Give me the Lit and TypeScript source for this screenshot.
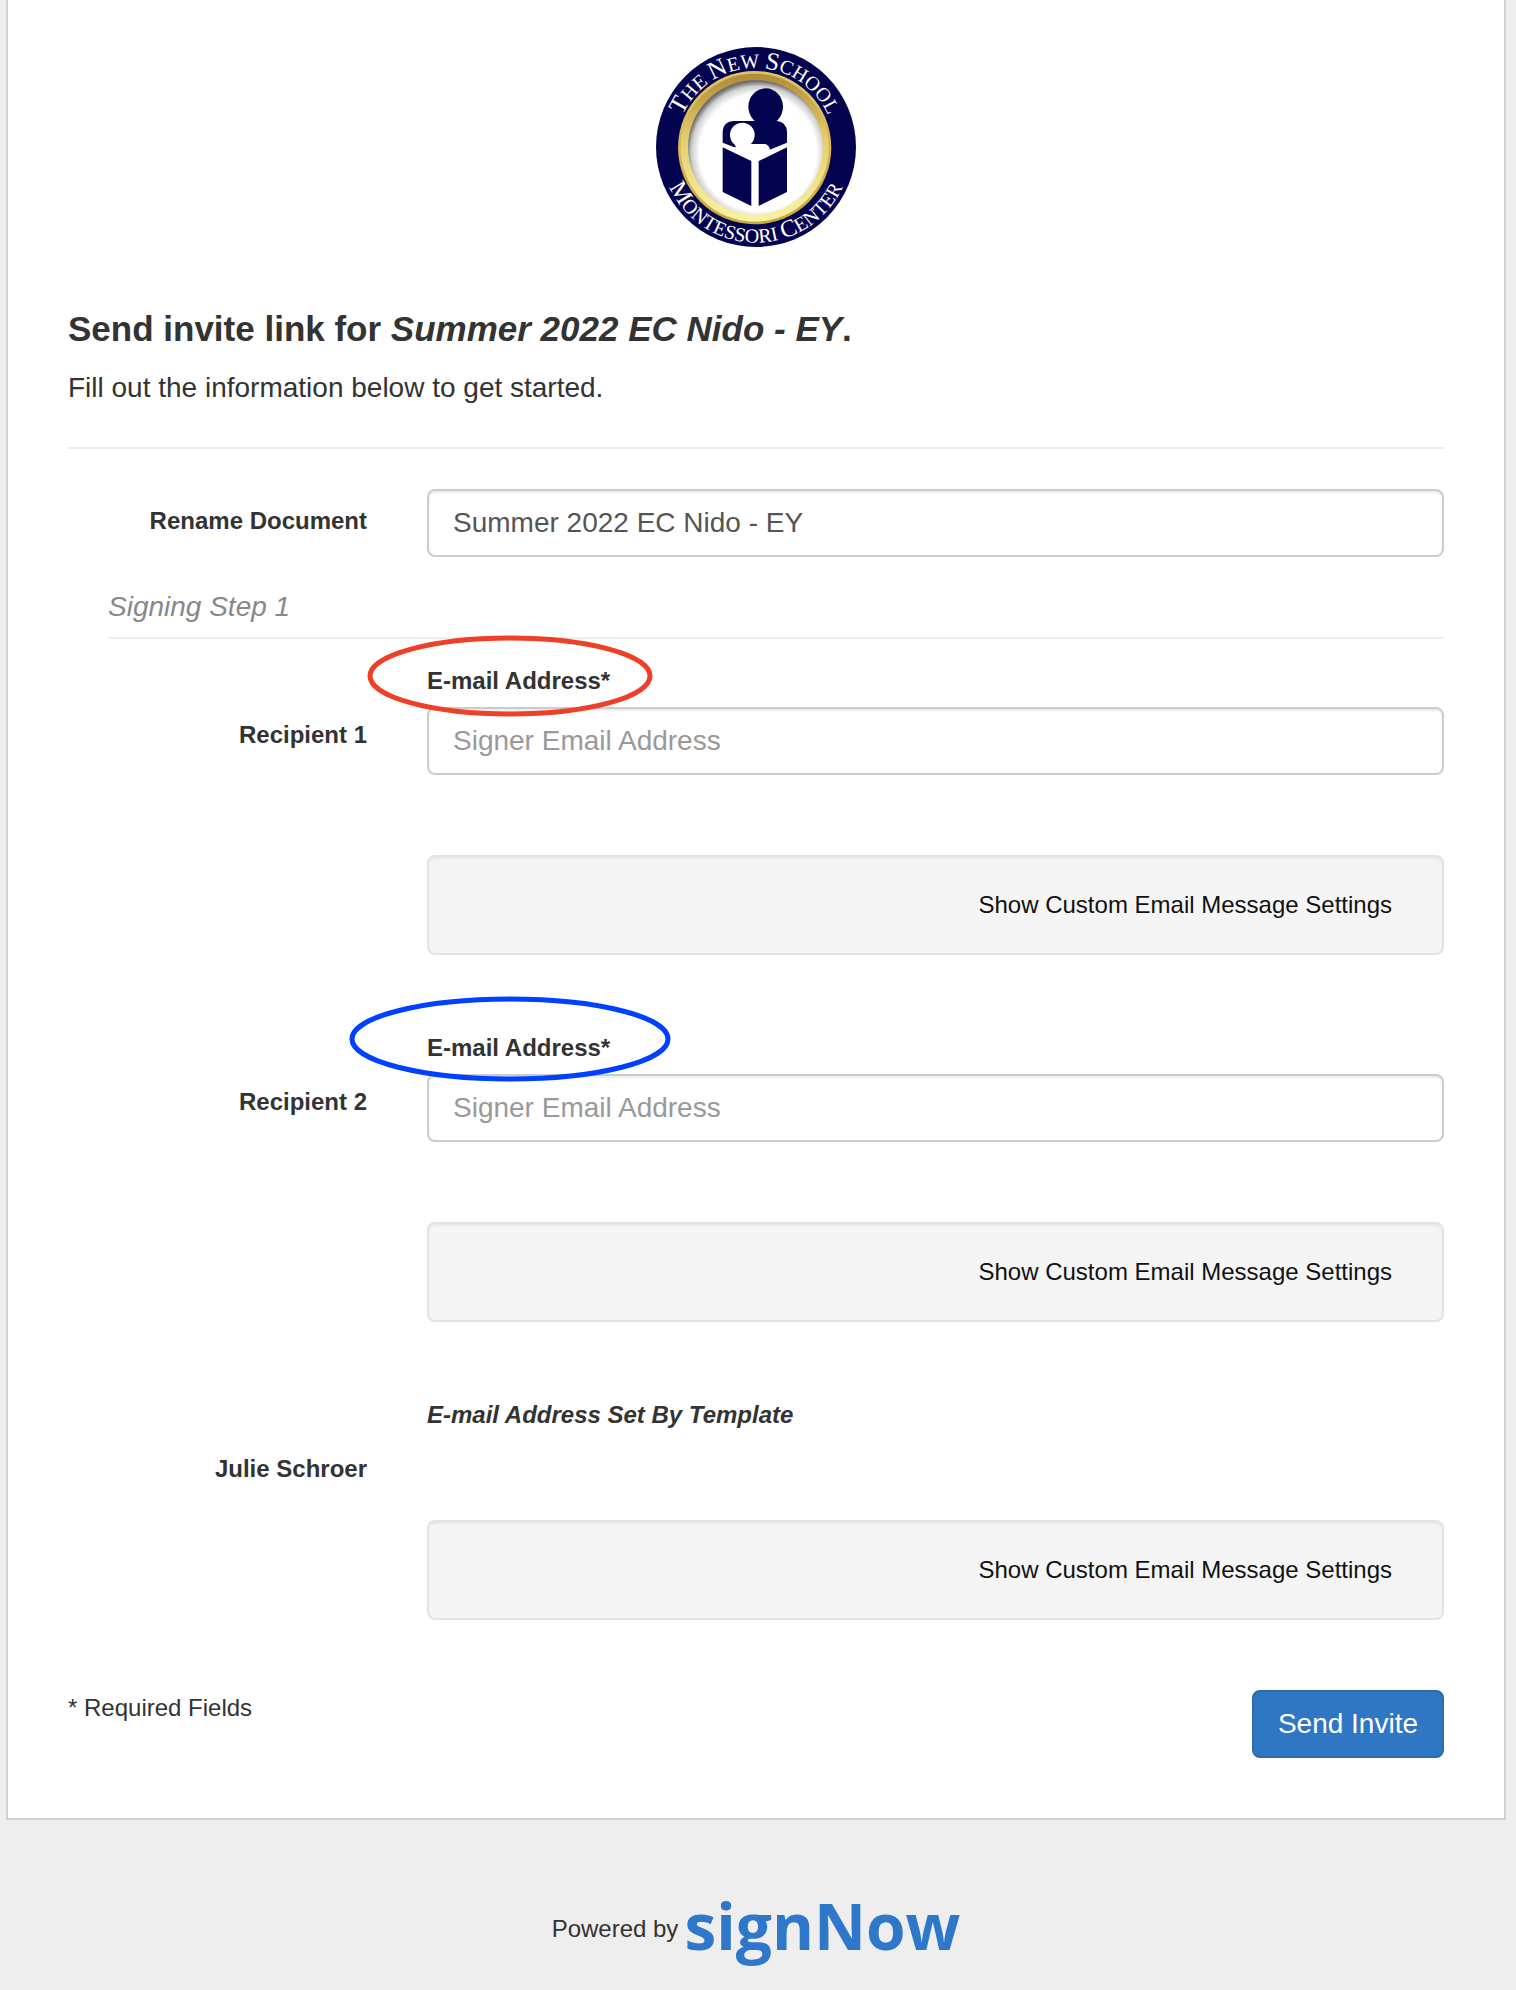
import { LitElement, html, css, nothing } from "lit";
import { customElement, property } from "lit/decorators.js";

@customElement("school-seal")
export class SchoolSeal extends LitElement {
  static styles = css`
    :host { display: block; width: 200px; height: 200px; }
    svg { display: block; width: 100%; height: 100%; }
    .lettering { font-family: "Liberation Serif", serif; fill: #fff; }
    .cap { font-size: 75px; }
    .small { font-size: 60px; }
    .low-cap { font-size: 73px; }
    .low-small { font-size: 60px; }
  `;

  render() {
    return html`<svg viewBox="48 51 600 600" role="img" aria-label="The New School Montessori Center">
      <defs>
        <linearGradient id="gold" x1="0" y1="0" x2="0" y2="1">
          <stop offset="0" stop-color="#b08a35"></stop>
          <stop offset="0.45" stop-color="#e6cf70"></stop>
          <stop offset="1" stop-color="#f9f3a4"></stop>
        </linearGradient>
        <linearGradient id="rim" x1="0" y1="0" x2="0" y2="1">
          <stop offset="0" stop-color="#e0c468"></stop>
          <stop offset="1" stop-color="#c9a73f"></stop>
        </linearGradient>
        <radialGradient id="well" cx="0.52" cy="0.54" r="0.53">
          <stop offset="0.82" stop-color="#fff"></stop>
          <stop offset="0.93" stop-color="#cfcfcf"></stop>
          <stop offset="1" stop-color="#6f6f6f"></stop>
        </radialGradient>
        <path id="upper" d="M108 352a238 238 0 0 1 476 0"></path>
        <path id="lower" d="M62 352a286 286 0 0 0 572 0"></path>
      </defs>
      <circle cx="348" cy="351" r="300" fill="#03034f"></circle>
      <circle cx="344" cy="353" r="230" fill="url(#rim)"></circle>
      <circle cx="344" cy="353" r="222" fill="url(#gold)"></circle>
      <circle cx="346" cy="352" r="202" fill="url(#well)"></circle>
      <g fill="#03034f">
        <ellipse cx="377" cy="230" rx="52" ry="55"></ellipse>
        <path d="M248 338v-30q0-34 36-35h58l10-6h50l10 6q29 4 29 34v31l-52 21q-6-17-24-17h-28l-54 10z"></path>
        <path d="M248 352l86 41v135l-86-42z"></path>
        <path d="M441 352l-85 41v135l85-42z"></path>
      </g>
      <circle cx="307" cy="315" r="37" fill="#fff"></circle>
      <path d="M284 344l50-2h42q10 3 14 16l-40 25-60-28z" fill="#fff"></path>
      <text class="lettering" text-anchor="middle"><textPath href="#upper" startOffset="50%"><tspan class="cap">T</tspan><tspan class="small">HE </tspan><tspan class="cap">N</tspan><tspan class="small">EW </tspan><tspan class="cap">S</tspan><tspan class="small">CHOOL</tspan></textPath></text>
      <text class="lettering" text-anchor="middle"><textPath href="#lower" startOffset="50%"><tspan class="low-cap">M</tspan><tspan class="low-small">ONTESSORI </tspan><tspan class="low-cap">C</tspan><tspan class="low-small">ENTER</tspan></textPath></text>
    </svg>`;
  }
}

@customElement("recipient-row")
export class RecipientRow extends LitElement {
  @property() name = "";
  @property() mark = "";
  @property({ type: Boolean }) preset = false;

  static styles = css`
    :host { display: block; }
    .row { display: grid; grid-template-columns: 299px 1fr; column-gap: 60px; }
    .name { padding-top: 54px; text-align: right; font-weight: 700; line-height: 36px; }
    .caption { display: block; position: relative; width: fit-content; margin-bottom: 8px; font-weight: 700; line-height: 36px; }
    .caption.preset { font-style: italic; }
    .email {
      display: block; box-sizing: border-box; width: 100%; height: 68px; padding: 0 24px;
      border: 2px solid #ccc; border-radius: 8px; background: #fff; color: #555;
      font: 28px "Liberation Sans", Arial, sans-serif; box-shadow: inset 0 2px 2px rgba(0, 0, 0, 0.075);
    }
    .email::placeholder { color: #999; opacity: 1; }
    .well {
      display: flex; justify-content: flex-end; align-items: center; box-sizing: border-box; height: 100px;
      margin: 80px 0 75px; padding: 0 40px; border: 2px solid #e3e3e3; border-radius: 8px;
      background: #f5f5f5; box-shadow: inset 0 2px 2px rgba(0, 0, 0, 0.05);
    }
    .well.preset { margin: 87px 0 0; }
    .toggle {
      padding: 0 10px; border: 0; background: none; color: #111;
      font: 24px/36px "Liberation Sans", Arial, sans-serif; cursor: pointer;
    }
    .ring { position: absolute; overflow: visible; pointer-events: none; fill: none; stroke-width: 5px; }
    .red { left: -60px; top: -27px; width: 286px; height: 80px; stroke: #ee4027; }
    .blue { left: -77px; top: -33px; width: 320px; height: 84px; stroke: #0040ff; }
  `;

  private ring() {
    if (this.mark === "red")
      return html`<svg class="ring red" viewBox="0 0 286 80" aria-hidden="true"><ellipse cx="143" cy="40" rx="140" ry="38"></ellipse></svg>`;
    if (this.mark === "blue")
      return html`<svg class="ring blue" viewBox="0 0 320 84" aria-hidden="true"><ellipse cx="160" cy="42" rx="158" ry="40"></ellipse></svg>`;
    return nothing;
  }

  render() {
    return html`<div class="row">
      <div class="name">${this.name}</div>
      <div>
        ${this.preset
          ? html`<div class="caption preset">E-mail Address Set By Template</div>`
          : html`<label class="caption" for="email">E-mail Address*${this.ring()}</label>
              <input class="email" id="email" type="email" placeholder="Signer Email Address" required />`}
        <div class="well ${this.preset ? "preset" : ""}">
          <button class="toggle" type="button">Show Custom Email Message Settings</button>
        </div>
      </div>
    </div>`;
  }
}

@customElement("app-root")
export class AppRoot extends LitElement {
  static styles = css`
    :host {
      display: block; box-sizing: border-box; min-height: 100vh; padding: 0 10px 0 6px; background: #eee;
      color: #333; font: 24px/36px "Liberation Sans", Arial, sans-serif;
    }
    .card { padding: 47px 60px 60px; border: 2px solid #d2d2d2; border-top: 0; background: #fff; }
    .seal { margin: 0 auto; }
    .title { margin: 62px 0 0; font-size: 35px; line-height: 40px; font-weight: 700; }
    .lead { margin: 19px 0 0; font-size: 28px; line-height: 40px; }
    .rule { margin: 39px 0 40px; border: 0; border-top: 2px solid #eee; }
    .rename { display: grid; grid-template-columns: 299px 1fr; column-gap: 60px; }
    .label { padding-top: 14px; text-align: right; font-weight: 700; }
    .document {
      display: block; box-sizing: border-box; width: 100%; height: 68px; padding: 0 24px;
      border: 2px solid #ccc; border-radius: 8px; background: #fff; color: #555;
      font: 28px "Liberation Sans", Arial, sans-serif; box-shadow: inset 0 2px 2px rgba(0, 0, 0, 0.075);
    }
    .step {
      margin: 30px 0 24px 40px; padding-bottom: 10px; border-bottom: 2px solid #eee;
      color: #888; font-size: 28px; line-height: 40px; font-weight: 400; font-style: italic;
    }
    .actions { display: flex; justify-content: space-between; align-items: flex-start; margin-top: 70px; }
    .send {
      height: 68px; padding: 0 24px; border: 2px solid #2a6bae; border-radius: 8px;
      background: #2f77c3; color: #fff; font: 28px "Liberation Sans", Arial, sans-serif; cursor: pointer;
    }
    .footer { display: flex; justify-content: center; align-items: center; gap: 6px; padding-top: 62px; }
    .powered { padding-top: 6px; }
    .brand {
      color: #2f77c9; font: 700 64px/88px "Open Sans", "Noto Sans", sans-serif; text-decoration: none;
    }
  `;

  render() {
    return html`
      <main class="card">
        <school-seal class="seal"></school-seal>
        <h1 class="title">Send invite link for <em>Summer 2022 EC Nido - EY</em>.</h1>
        <p class="lead">Fill out the information below to get started.</p>
        <hr class="rule" />
        <form>
          <div class="rename">
            <label class="label" for="document">Rename Document</label>
            <input class="document" id="document" type="text" value="Summer 2022 EC Nido - EY" />
          </div>
          <h2 class="step">Signing Step 1</h2>
          <recipient-row name="Recipient 1" mark="red"></recipient-row>
          <recipient-row name="Recipient 2" mark="blue"></recipient-row>
          <recipient-row name="Julie Schroer" preset></recipient-row>
          <div class="actions">
            <span>* Required Fields</span>
            <button class="send" type="button">Send Invite</button>
          </div>
        </form>
      </main>
      <footer class="footer">
        <span class="powered">Powered by</span>
        <a class="brand" href="#">signNow</a>
      </footer>
    `;
  }
}
